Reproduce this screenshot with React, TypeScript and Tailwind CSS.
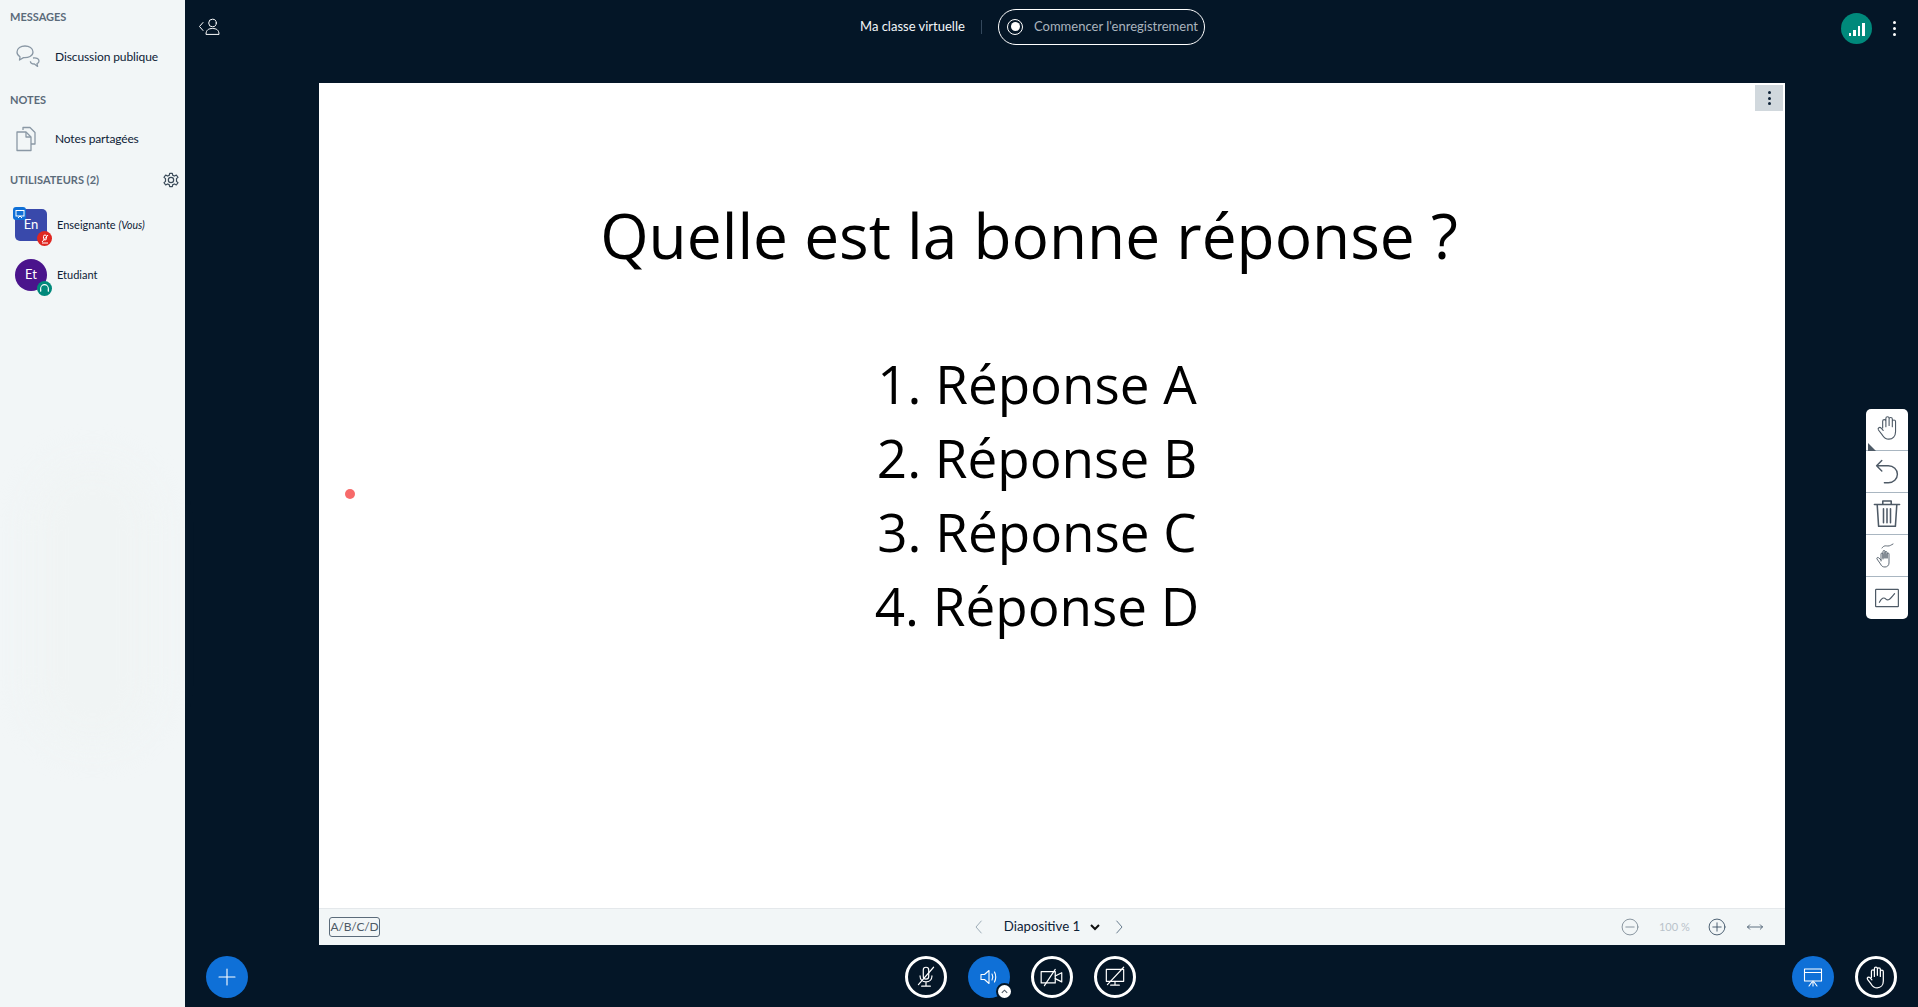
import type { ReactNode } from "react";

const ui = "font-['Lato',sans-serif]";

const Line = ({ children, className = "", size = 24, box = "0 0 24 24", stroke = 1.1 }: { children: ReactNode; className?: string; size?: number; box?: string; stroke?: number }) => (
  <svg width={size} height={size} viewBox={box} fill="none" stroke="currentColor" strokeWidth={stroke} strokeLinecap="round" strokeLinejoin="round" className={className}>
    {children}
  </svg>
);

const Hand = () => (
  <path d="M7 13V7.500a1.300 1.300 0 0 1 2.600 0V12M9.600 11V5.200a1.300 1.300 0 0 1 2.600 0V11M12.200 11V5.800a1.300 1.300 0 0 1 2.600 0V12M14.800 12V7.800a1.300 1.300 0 0 1 2.600 0V16c0 3.500-2.200 6-5.400 6-2.600 0-4-1.200-5.200-3.200L3.600 14.600c-.9-1.500 1-2.700 2.100-1.600L7.400 15" />
);

const RoundButton = ({ children, filled = false }: { children: ReactNode; filled?: boolean }) => (
  <div className={`flex h-[42px] w-[42px] items-center justify-center rounded-full text-white ${filled ? "bg-[#0f70d7]" : "border-[3px] border-white"}`}>
    {children}
  </div>
);

const SectionTitle = ({ children }: { children: ReactNode }) => (
  <div className="text-[11px] font-bold leading-[12px] text-[#5b6b7a]">{children}</div>
);

const ToolButton = ({ children, last = false, className = "" }: { children: ReactNode; last?: boolean; className?: string }) => (
  <div className={`flex h-[42px] items-center justify-center text-[#4e5a66] ${last ? "" : "border-b border-[#a9b6c1]"} ${className}`}>{children}</div>
);

export default function App() {
  return (
    <div className={`flex h-[1007px] w-[1918px] overflow-hidden bg-[#041627] ${ui}`}>
      {/* Sidebar */}
      <aside className="flex w-[185px] shrink-0 flex-col bg-[#f2f6f7] text-[#0d2136]">
        <div className="pl-[10px] pt-[11px]">
          <SectionTitle>MESSAGES</SectionTitle>
        </div>
        <div className="mt-[14px] flex h-[40px] items-center pl-[15px]">
          <svg width="26" height="26" viewBox="0 0 26 26" fill="none" stroke="#8a98a5" strokeWidth="1.3" strokeLinejoin="round">
            <path d="M10 2c-4 0-8 2-8 6 0 2.300 1.200 3.800 3 4.800L4.500 16l4-2.400c4.800.4 9.500-1.600 9.500-5.600 0-4-4-6-8-6z" />
            <path d="M18 14c3-.6 6 .4 6 3 0 1.200-.8 2.200-2 2.600l.6 2.800-3.200-2.400c-2 0-4-1-4-2.800" />
          </svg>
          <span className="ml-[14px] text-[12px] tracking-[-0.1px] text-[#0d2136]">Discussion publique</span>
        </div>
        <div className="mt-[17px] pl-[10px]">
          <SectionTitle>NOTES</SectionTitle>
        </div>
        <div className="mt-[11px] flex h-[44px] items-center pl-[15px]">
          <svg width="22" height="26" viewBox="0 0 22 26" fill="none" stroke="#8a98a5" strokeWidth="1.3" strokeLinejoin="round">
            <path d="M8 4V1.500h7l5 5V18h-4" />
            <path d="M2 6h9l5 5v13.500H2z" />
            <path d="M11 6v5h5" />
          </svg>
          <span className="ml-[18px] text-[12px] tracking-[-0.15px] text-[#0d2136]">Notes partagées</span>
        </div>
        <div className="mt-[11px] flex items-center justify-between pl-[10px] pr-[6px]">
          <SectionTitle>UTILISATEURS (2)</SectionTitle>
          <svg width="16" height="16" viewBox="0 0 24 24" fill="none" stroke="#3a4a59" strokeWidth="1.8" strokeLinejoin="round">
            <circle cx="12" cy="12" r="4" />
            <path d="M10 2h4l.7 3 2.600 1.100L20 4.500 22.500 8l-2.300 2 .1 2-.1 2 2.300 2-2.500 3.500-2.700-1.600L14.700 19l-.7 3h-4l-.7-3-2.600-1.100L4 19.500 1.500 16l2.300-2-.1-2 .1-2L1.500 8 4 4.500l2.700 1.600L9.300 5z" />
          </svg>
        </div>
        <div className="mt-[21px] flex items-center pl-[15px]">
          <div className="relative flex h-[32px] w-[32px] items-center justify-center rounded-[5px] bg-[#3949ab] text-[13px] text-white">
            En
            <span className="absolute -left-[2px] -top-[2px] flex h-[13px] w-[13px] items-center justify-center rounded-[3px] bg-[#0f70d7]">
              <svg width="10" height="10" viewBox="0 0 10 10" fill="none" stroke="white" strokeWidth="1">
                <rect x="1" y="1.500" width="8" height="5.500" />
                <path d="M3 9l2-2 2 2" />
              </svg>
            </span>
            <span className="absolute -bottom-[5px] -right-[5px] flex h-[15px] w-[15px] items-center justify-center rounded-full bg-[#df2721]">
              <svg width="10" height="10" viewBox="0 0 10 10" fill="none" stroke="white" strokeWidth="1">
                <rect x="3.500" y="1" width="3" height="5" rx="1.500" />
                <path d="M2 9h6M8 1L2 8" />
              </svg>
            </span>
          </div>
          <span className="ml-[10px] text-[11px] text-[#0d2136]">
            Enseignante <i className="text-[10.500px]">(Vous)</i>
          </span>
        </div>
        <div className="mt-[18px] flex items-center pl-[15px]">
          <div className="relative flex h-[32px] w-[32px] items-center justify-center rounded-full bg-[#4a148c] text-[13px] text-white">
            Et
            <span className="absolute -bottom-[5px] -right-[5px] flex h-[15px] w-[15px] items-center justify-center rounded-full bg-[#00897b]">
              <svg width="11" height="11" viewBox="0 0 10 10" fill="none" stroke="white" strokeWidth="1">
                <path d="M1.500 7V5a3.500 3.500 0 0 1 7 0v2" />
                <path d="M1.500 6v2M8.500 6v2" />
              </svg>
            </span>
          </div>
          <span className="ml-[10px] text-[11px] text-[#0d2136]">Etudiant</span>
        </div>
        <div className="mx-[30px] mb-[260px] mt-[170px] flex-1 rounded-full bg-[#f0f4f4] blur-lg" />
      </aside>

      <main className="relative flex min-w-0 flex-1 flex-col">
        {/* Header */}
        <header className="relative flex h-[83px] shrink-0 pb-[30px]">
          <div className="flex w-[134px] items-center pl-[13px] text-white">
            <svg width="24" height="20" viewBox="0 0 24 20" fill="none" stroke="white" strokeWidth="1" strokeLinecap="round" strokeLinejoin="round">
              <path d="M5 5.500L1.500 9.500 5 13.500" />
              <circle cx="14.500" cy="6" r="3.800" />
              <path d="M8 17c0-4 2.500-5.500 6.500-5.500S21 13 21 17z" />
            </svg>
          </div>
          <div className="flex flex-1 items-center pl-[541px]">
            <span className="w-[106px] whitespace-nowrap text-[13px] text-[#f3f6f9]">Ma classe virtuelle</span>
            <span className="ml-[15px] h-[14px] w-px bg-[#34485c]" />
            <div className="ml-[16px] flex h-[36px] w-[207px] items-center rounded-full border border-white pl-[8px] text-[13px] text-[#aab4be]">
              <span className="flex h-[16px] w-[16px] items-center justify-center rounded-full border border-white">
                <span className="h-[9px] w-[9px] rounded-full bg-white" />
              </span>
              <span className="ml-[11px] whitespace-nowrap">Commencer l'enregistrement</span>
            </div>
          </div>
          <div className="flex items-center pr-[22px] pt-[3px]">
            <div className="flex h-[31px] w-[31px] items-end justify-center gap-[2px] rounded-full bg-[#00897b] pb-[8px]">
              <span className="h-[2.500px] w-[2.500px] bg-white" />
              <span className="h-[6px] w-[2.500px] bg-white" />
              <span className="h-[10px] w-[2.500px] bg-white" />
              <span className="h-[13px] w-[2.500px] bg-white" />
            </div>
            <div className="ml-[21px] flex flex-col gap-[3px]">
              <span className="h-[3px] w-[3px] rounded-full bg-white" />
              <span className="h-[3px] w-[3px] rounded-full bg-white" />
              <span className="h-[3px] w-[3px] rounded-full bg-white" />
            </div>
          </div>
        </header>

        {/* Slide */}
        <section className="flex min-h-0 flex-1 pl-[134px] pr-[133px]">
          <div className="relative flex flex-1 flex-col bg-white">
            <div className="absolute right-[2px] top-[2px] flex h-[26px] w-[28px] flex-col items-center justify-center gap-[2.500px] bg-[#d1d8dd]">
              <span className="h-[3px] w-[3px] rounded-full bg-[#0d2136]" />
              <span className="h-[3px] w-[3px] rounded-full bg-[#0d2136]" />
              <span className="h-[3px] w-[3px] rounded-full bg-[#0d2136]" />
            </div>
            <span className="absolute left-[26px] top-[406px] h-[10px] w-[10px] rounded-full bg-[#f76a6a]" />
            <div className="flex flex-1 flex-col items-center pt-[116px] font-['Open_Sans',sans-serif] text-black">
              <div className="pr-[46px] text-[62.200px] leading-[72px]">Quelle est la bonne réponse ?</div>
              <div className="mt-[76px] pr-[30px] text-center text-[53px] leading-[74px]">
                <div>1. Réponse A</div>
                <div>2. Réponse B</div>
                <div>3. Réponse C</div>
                <div>4. Réponse D</div>
              </div>
            </div>
            <div className="flex h-[37px] shrink-0 items-center justify-between border-t border-[#e4e8eb] bg-[#f2f6f7] pl-[10px] pr-[21px]">
              <div className="flex h-[20px] w-[51px] items-center justify-center rounded-[3px] border border-[#5b6b7a] text-[12px] tracking-[-0.2px] text-[#4e5a66]">A/B/C/D</div>
              <div className="flex items-center pl-[98px] text-[#0d2136]">
                <Line size={18} className="text-[#8a9ba9]"><path d="M15 4L8 12l7 8" /></Line>
                <span className="ml-[16px] text-[13.250px]">Diapositive 1</span>
                <svg width="12" height="12" viewBox="0 0 12 12" fill="none" stroke="#111" strokeWidth="2" className="ml-[9px]"><path d="M2 4l4 4 4-4" /></svg>
                <Line size={18} className="ml-[9px] text-[#4d6478]"><path d="M9 4l7 8-7 8" /></Line>
              </div>
              <div className="flex items-center text-[#4e5a66]">
                <Line size={20} className="text-[#7f8c97]"><circle cx="12" cy="12" r="9.500" /><path d="M7 12h10" /></Line>
                <span className="ml-[19px] w-[29px] whitespace-nowrap text-[11px] text-[#b9c2ca]">100 %</span>
                <Line size={20} className="ml-[19px] text-[#3f5468]"><circle cx="12" cy="12" r="9.500" /><path d="M7 12h10M12 7v10" /></Line>
                <Line size={18} className="ml-[19px] text-[#3f5468]"><path d="M2 12h20M5 9l-3 3 3 3M19 9l3 3-3 3" /></Line>
              </div>
            </div>
          </div>
        </section>

        {/* Action bar */}
        <footer className="flex h-[62px] shrink-0 items-center justify-between pl-[21px] pr-[21px] pt-[2px]">
          <RoundButton filled>
            <Line size={24}><path d="M12 4v16M4 12h16" /></Line>
          </RoundButton>
          <div className="flex items-center gap-[21px]">
            <RoundButton>
              <Line size={26}><rect x="9.500" y="3" width="5" height="11" rx="2.500" /><path d="M6.500 11c0 3.500 2.500 5.500 5.500 5.500s5.500-2 5.500-5.500M12 16.500V20M8 20.500h8M19 3L5 19" /></Line>
            </RoundButton>
            <div className="relative">
              <RoundButton filled>
                <Line size={24}><path d="M4 9.500v5h3.500L12 18.500v-13L7.500 9.500zM15 9c1 1.800 1 4.200 0 6M17.500 7c1.500 3 1.500 7 0 10" /></Line>
              </RoundButton>
              <span className="absolute -bottom-[2px] -right-[3px] flex h-[17px] w-[17px] items-center justify-center rounded-full border-2 border-[#041627] bg-white">
                <svg width="9" height="9" viewBox="0 0 10 10" fill="none" stroke="#4e5a66" strokeWidth="1.200"><path d="M2 6.500l3-3 3 3" /></svg>
              </span>
            </div>
            <RoundButton>
              <Line size={26}><rect x="2" y="7" width="13" height="10.500" /><path d="M15 11l6-3v8.500l-6-3M15 5L5 20" /></Line>
            </RoundButton>
            <RoundButton>
              <Line size={26}><rect x="4" y="5" width="16" height="11" /><path d="M8 19.500h8M12 16v3.500M20 3L5 19" /></Line>
            </RoundButton>
          </div>
          <div className="flex items-center gap-[21px]">
            <RoundButton filled>
              <Line size={24}><rect x="3.500" y="4" width="17" height="12" /><path d="M3.500 7.500h17M12 16v5M8 21l3-4M16 21l-3-4" /></Line>
            </RoundButton>
            <RoundButton>
              <Line size={24} box="2 2 18 21"><Hand /></Line>
            </RoundButton>
          </div>
        </footer>

        {/* Whiteboard toolbar */}
        <div className="absolute right-[10px] top-[409px] w-[42px] overflow-hidden rounded-[5px] bg-white">
          <div className="relative">
            <ToolButton className="pb-[3px]"><Line size={26} box="2.500 2.500 16 21" stroke={0.9}><Hand /></Line></ToolButton>
            <span className="absolute bottom-0 left-[2px] h-0 w-0 border-l-[8px] border-t-[8px] border-l-[#4e5a66] border-t-transparent" />
          </div>
          <ToolButton className="pb-[2px]"><Line size={26} box="2 2 20 20"><path d="M4 8l4-4M4 8l4 4M4 8h9c4 0 7 3 7 6.500S17 21 13 21h-3" /></Line></ToolButton>
          <ToolButton className="pb-[1px]"><Line size={28} box="2 2 20 20"><path d="M3 6h18M9 6V3.500h6V6M5 6l1 15.500h12l1-15.500M9.500 9v10M12 9v10M14.500 9v10" /></Line></ToolButton>
          <ToolButton>
            <svg width="26" height="28" viewBox="0 0 26 28" fill="none" stroke="currentColor" strokeWidth="0.9" strokeLinecap="round" strokeLinejoin="round">
              <path d="M8 6c2-3 4-2 6-2s3-1 5-2" />
              <path d="M7 19v-7a1 1 0 0 1 2 0v5M9 16V9.500a1 1 0 0 1 2 0V16M11 16v-5.500a1 1 0 0 1 2 0V16M13 16v-4a1 1 0 0 1 2 0v9c0 2.500-2 4-4 4-2.500 0-3.500-1-4.500-3L3 17c-.7-1.200.7-2 1.700-1.200L7 18" />
            </svg>
          </ToolButton>
          <ToolButton last className="pb-[1px]"><Line size={26}><rect x="1.500" y="4" width="21" height="16" rx="0.500" /><path d="M5 16c2-4 4-5 6-3s4 0 8-5" /></Line></ToolButton>
        </div>
      </main>
    </div>
  );
}
